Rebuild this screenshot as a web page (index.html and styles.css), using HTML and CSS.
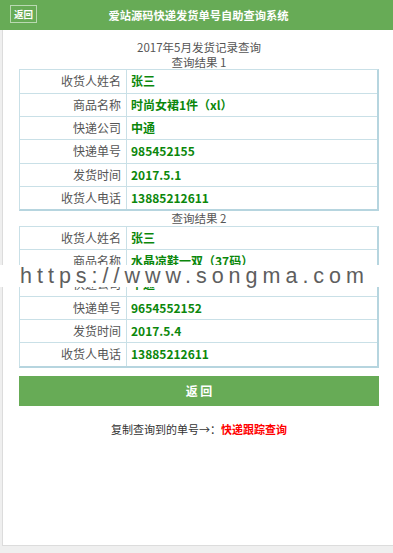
FILE: index.html
```html
<!DOCTYPE html>
<html lang="zh-CN">
<head>
<meta charset="utf-8">
<title>爱站源码快递发货单号自助查询系统</title>
<link rel="stylesheet" href="styles.css">
</head>
<body>
<header class="topbar">
  <div class="topbar-left"><a class="back">返回</a></div>
  <h1 class="title">爱站源码快递发货单号自助查询系统</h1>
  <div></div>
</header>
<main class="page">
  <div class="content">
    <div class="heading">2017年5月发货记录查询<br>查询结果 1</div>
    <table class="result">
      <tr><td class="label">收货人姓名</td><td class="value">张三</td></tr>
      <tr><td class="label">商品名称</td><td class="value">时尚女裙1件（xl）</td></tr>
      <tr><td class="label">快递公司</td><td class="value">中通</td></tr>
      <tr><td class="label">快递单号</td><td class="value">985452155</td></tr>
      <tr><td class="label">发货时间</td><td class="value">2017.5.1</td></tr>
      <tr><td class="label">收货人电话</td><td class="value">13885212611</td></tr>
    </table>
    <div class="heading">查询结果 2</div>
    <table class="result">
      <tr><td class="label">收货人姓名</td><td class="value">张三</td></tr>
      <tr><td class="label">商品名称</td><td class="value">水晶凉鞋一双（37码）</td></tr>
      <tr><td class="label">快递公司</td><td class="value">中通</td></tr>
      <tr><td class="label">快递单号</td><td class="value">9654552152</td></tr>
      <tr><td class="label">发货时间</td><td class="value">2017.5.4</td></tr>
      <tr><td class="label">收货人电话</td><td class="value">13885212611</td></tr>
    </table>
    <a class="btn">返 回</a>
    <p class="note">复制查询到的单号→：<a class="track">快递跟踪查询</a></p>
  </div>
</main>
<div class="watermark">https://www.songma.com</div>
</body>
</html>
```
FILE: styles.css
```css
html, body {
  margin: 0;
  padding: 0;
}
body {
  background: #efefef;
  font-family: "Noto Sans CJK SC", "Noto Sans", sans-serif;
  position: relative;
}
.topbar {
  display: grid;
  grid-template-columns: 1fr auto 1fr;
  align-items: start;
  height: 30px;
  padding-left: 4px;
  background: #67ab56;
}
.topbar-left {
  display: flex;
}
.back {
  margin: 5px 0 0 6px;
  display: block;
  height: 16px;
  line-height: 16px;
  padding: 0 3px;
  border: 1px solid rgba(255, 255, 255, 0.55);
  color: #fff;
  font-size: 9.5px;
  font-weight: bold;
}
.title {
  margin: 0;
  line-height: 30px;
  font-size: 11.25px;
  font-weight: bold;
  color: #fff;
  white-space: nowrap;
}
.page {
  margin-left: 2px;
  height: 515px;
  background: #fff;
  border-left: 1px solid #dcdcdc;
  border-bottom: 1px solid #dcdcdc;
}
.content {
  margin-left: 16px;
  width: 360px;
  padding-top: 10px;
  text-align: center;
}
.heading {
  font-size: 11.5px;
  line-height: 14.6px;
  color: #555;
}
.result {
  width: 360px;
  border-collapse: separate;
  border-spacing: 0;
  border-style: solid;
  border-color: #c9e0e7 #b6d5df #b6d5df #c9e0e7;
  border-width: 1px 2px 2px 1px;
  font-size: 12px;
  text-align: left;
}
.result td {
  height: 22.33px;
  line-height: 22.33px;
  padding: 0;
  border-bottom: 1px solid #c9e0e7;
  white-space: nowrap;
}
.result tr:last-child td {
  border-bottom: 0;
}
.result .label {
  width: 101px;
  padding-right: 5px;
  text-align: right;
  color: #555;
  border-right: 1px solid #c9e0e7;
}
.result .value {
  padding-left: 4px;
  color: #0b870b;
  font-weight: bold;
}
.btn {
  display: block;
  margin-top: 8px;
  height: 30px;
  line-height: 30px;
  background: #67ab56;
  color: #fff;
  font-size: 12px;
  font-weight: bold;
}
.note {
  margin: 15px 0 0;
  font-size: 11px;
  line-height: 16px;
  color: #333;
}
.track {
  color: #f00;
  font-weight: bold;
}
.watermark {
  position: absolute;
  left: 0;
  top: 265px;
  width: 361px;
  height: 22px;
  padding-left: 20px;
  background: #fff;
  font-family: "Liberation Sans", Arial, sans-serif;
  font-size: 21.5px;
  line-height: 22px;
  letter-spacing: 5px;
  color: #5e5e5e;
  white-space: nowrap;
}
```
